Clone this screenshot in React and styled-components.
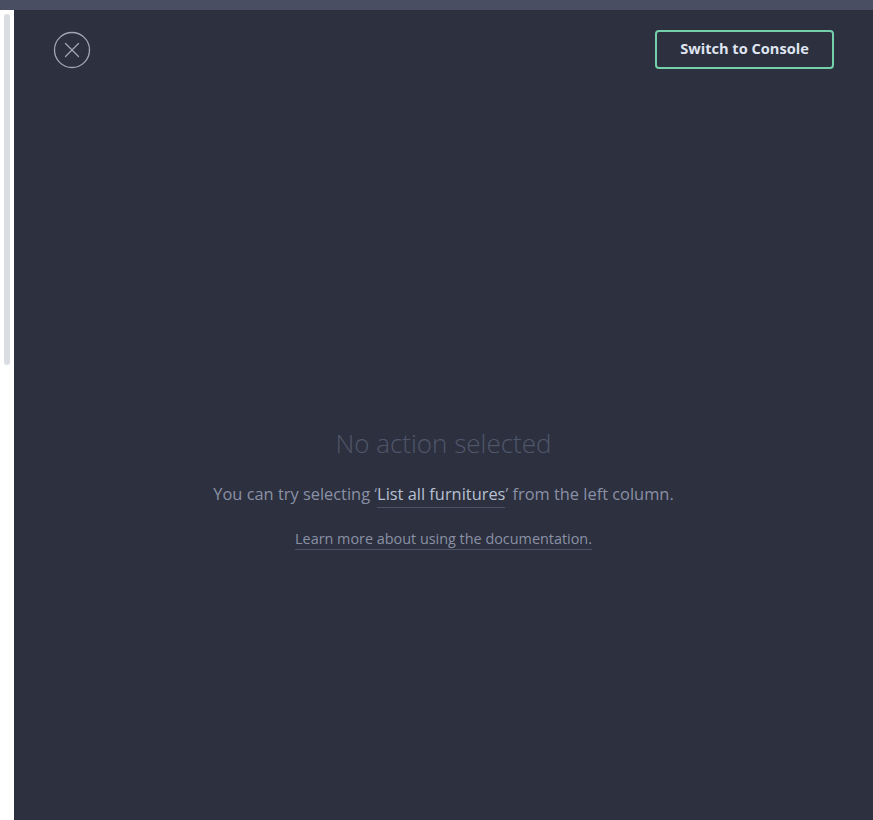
import React from "react";
import styled, { createGlobalStyle } from "styled-components";

const GlobalStyle = createGlobalStyle`
  html, body {
    margin: 0;
    padding: 0;
    height: 100%;
    background: #ffffff;
    font-family: "Open Sans", "Noto Sans", sans-serif;
  }
  #root {
    height: 100%;
  }
`;

function CloseIcon() {
  return (
    <svg width="38" height="38" viewBox="0 0 38 38" fill="none">
      <circle cx="19" cy="19" r="17.5" stroke="#a2a6b3" strokeWidth="1.3" />
      <path d="M12.5 12.5 L25.5 25.5 M25.5 12.5 L12.5 25.5" stroke="#a2a6b3" strokeWidth="1.3" strokeLinecap="round" />
    </svg>
  );
}

function App() {
  return (
    <>
      <GlobalStyle />
      <StPage>
        <StTopBar />
        <StBody>
          <StGutter>
            <StThumb />
          </StGutter>
          <StPanel>
            <StHeader>
              <StCloseBtn aria-label="close">
                <CloseIcon />
              </StCloseBtn>
              <StConsoleBtn>Switch to Console</StConsoleBtn>
            </StHeader>
            <StEmpty>
              <StTitle>No action selected</StTitle>
              <StHint>
                You can try selecting ‘<StHintLink>List all furnitures</StHintLink>’ from the left column.
              </StHint>
              <StDocLink>Learn more about using the documentation.</StDocLink>
            </StEmpty>
          </StPanel>
        </StBody>
      </StPage>
    </>
  );
}

export default App;

const StPage = styled.div`
  height: 820px;
  display: flex;
  flex-direction: column;
  overflow: hidden;
`;

const StTopBar = styled.div`
  height: 10px;
  flex-shrink: 0;
  background-color: #4a4e62;
`;

const StBody = styled.div`
  flex: 1;
  display: flex;
`;

const StGutter = styled.div`
  width: 14px;
  flex-shrink: 0;
  background-color: #ffffff;
  padding: 4px 0 0 4px;
  box-sizing: border-box;
`;

const StThumb = styled.div`
  width: 6px;
  height: 351px;
  border-radius: 3px;
  background-color: #dadde2;
`;

const StPanel = styled.div`
  flex: 1;
  background-color: #2d303e;
  display: flex;
  flex-direction: column;
`;

const StHeader = styled.div`
  display: flex;
  justify-content: space-between;
  align-items: flex-start;
  padding: 20px 39px 0 39px;
`;

const StCloseBtn = styled.button`
  background: none;
  border: none;
  padding: 0;
  margin-top: 1px;
  width: 38px;
  height: 38px;
  cursor: pointer;
  display: flex;
`;

const StConsoleBtn = styled.button`
  height: 39px;
  width: 179px;
  padding: 0 0 3px;
  border: 2px solid #74cfaa;
  border-radius: 4px;
  background: transparent;
  color: #dfe4f0;
  font-family: "Open Sans", "Noto Sans", sans-serif;
  font-size: 14.6px;
  font-weight: 700;
  cursor: pointer;
`;

const StEmpty = styled.div`
  display: flex;
  flex-direction: column;
  align-items: center;
  padding-top: 357px;
`;

const StTitle = styled.div`
  font-size: 26px;
  font-weight: 300;
  color: #4f576b;
  line-height: 34px;
`;

const StHint = styled.div`
  margin-top: 23px;
  font-size: 16.4px;
  font-weight: 400;
  color: #8a91a6;
  line-height: 22px;
`;

const StHintLink = styled.a`
  color: #b7c0d2;
  border-bottom: 1px solid #4d5366;
  padding-bottom: 2px;
  cursor: pointer;
`;

const StDocLink = styled.a`
  margin-top: 24px;
  font-size: 14.4px;
  color: #8a91a6;
  line-height: 20px;
  border-bottom: 1px solid #4d5366;
  cursor: pointer;
`;
